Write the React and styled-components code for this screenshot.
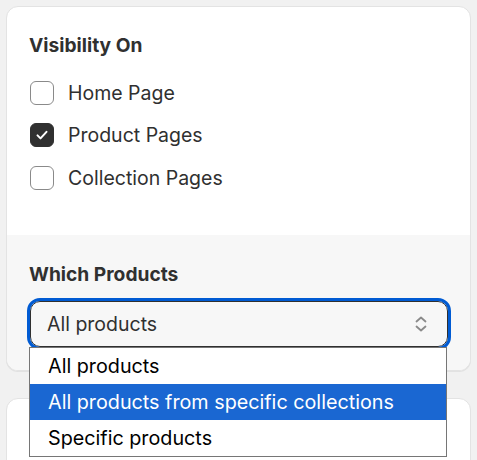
import React, { useState } from "react";
import styled, { createGlobalStyle } from "styled-components";

const GlobalStyle = createGlobalStyle`
  html, body {
    margin: 0;
    padding: 0;
    background: #f1f1f1;
    font-family: Inter, "Noto Sans", sans-serif;
  }
  * { box-sizing: border-box; }
`;

const Page = styled.div`
  height: 460px;
  overflow: hidden;
  padding: 6px 6px 0 6px;
  display: flex;
  flex-direction: column;
  gap: 27px;
`;

const Card = styled.div`
  background: #ffffff;
  border: 1px solid #e3e3e3;
  border-radius: 12px;
  box-shadow: 0 1px 0 rgba(26, 26, 26, 0.07);
  height: ${(p) => p.$height || "auto"};
  flex-shrink: 0;
`;

const Section = styled.div`
  padding: ${(p) => p.$pad};
  background: ${(p) => (p.$muted ? "#f7f7f7" : "transparent")};
  border-radius: ${(p) => (p.$muted ? "0 0 11px 11px" : "11px 11px 0 0")};
`;

const Title = styled.h2`
  margin: 0;
  font-size: 19.2px;
  line-height: 24px;
  font-weight: 700;
  color: #303030;
  padding-left: 22px;
`;

const Options = styled.div`
  display: flex;
  flex-direction: column;
  gap: 18.5px;
  margin-top: 23.5px;
  padding-left: 23px;
`;

const Row = styled.label`
  display: flex;
  align-items: center;
  gap: 14px;
  height: 24px;
  font-size: 19.5px;
  color: #303030;
  cursor: pointer;
`;

const Box = styled.span`
  width: 24px;
  height: 24px;
  border-radius: 6px;
  border: 1px solid ${(p) => (p.$checked ? "#303030" : "#8a8a8a")};
  background: ${(p) => (p.$checked ? "#303030" : "#ffffff")};
  display: flex;
  align-items: center;
  justify-content: center;
  flex-shrink: 0;
`;

const SelectWrap = styled.div`
  position: relative;
  margin: 14.5px 0 0 23px;
  width: 418px;
`;

const SelectBox = styled.div`
  height: 46px;
  border: 1px solid #303030;
  border-radius: 10px;
  background: #f7f7f7;
  outline: 3px solid #005bd3;
  display: flex;
  align-items: center;
  justify-content: space-between;
  padding: 0 19px 0 16px;
  font-size: 19.5px;
  color: #303030;
`;

const List = styled.ul`
  position: absolute;
  top: 46px;
  left: -1px;
  width: 418px;
  margin: 0;
  padding: 0;
  list-style: none;
  background: #ffffff;
  border: 1px solid #767676;
  z-index: 5;
`;

const Item = styled.li`
  height: 36px;
  line-height: 36px;
  padding-left: 18px;
  font-size: 19.75px;
  color: ${(p) => (p.$active ? "#ffffff" : "#000000")};
  background: ${(p) => (p.$active ? "#1a67d2" : "transparent")};
  white-space: nowrap;
`;

const Check = () => (
  <svg width="14" height="14" viewBox="0 0 14 14" fill="none">
    <path d="M2.5 7.4l3 3 6-6.6" stroke="#fff" strokeWidth="2" strokeLinecap="round" strokeLinejoin="round" />
  </svg>
);

const Chevrons = () => (
  <svg width="14" height="18" viewBox="0 0 14 18" fill="none">
    <path d="M2.5 6.5L7 2.5l4.5 4" stroke="#8a8a8a" strokeWidth="1.8" strokeLinecap="round" strokeLinejoin="round" />
    <path d="M2.5 11.5L7 15.5l4.5-4" stroke="#8a8a8a" strokeWidth="1.8" strokeLinecap="round" strokeLinejoin="round" />
  </svg>
);

const pages = [
  { label: "Home Page", checked: false },
  { label: "Product Pages", checked: true },
  { label: "Collection Pages", checked: false },
];

const choices = ["All products", "All products from specific collections", "Specific products"];

export default function App() {
  const [hover] = useState(1);
  return (
    <>
      <GlobalStyle />
      <Page>
        <Card>
          <Section $pad="26px 0 45px 0">
            <Title>Visibility On</Title>
            <Options>
              {pages.map((p) => (
                <Row key={p.label}>
                  <Box $checked={p.checked}>{p.checked && <Check />}</Box>
                  {p.label}
                </Row>
              ))}
            </Options>
          </Section>
          <Section $muted $pad="27.5px 0 23px 0">
            <Title>Which Products</Title>
            <SelectWrap>
              <SelectBox>
                <span>All products</span>
                <Chevrons />
              </SelectBox>
              <List>
                {choices.map((c, i) => (
                  <Item key={c} $active={i === hover}>
                    {c}
                  </Item>
                ))}
              </List>
            </SelectWrap>
          </Section>
        </Card>
        <Card $height="120px" />
      </Page>
    </>
  );
}
